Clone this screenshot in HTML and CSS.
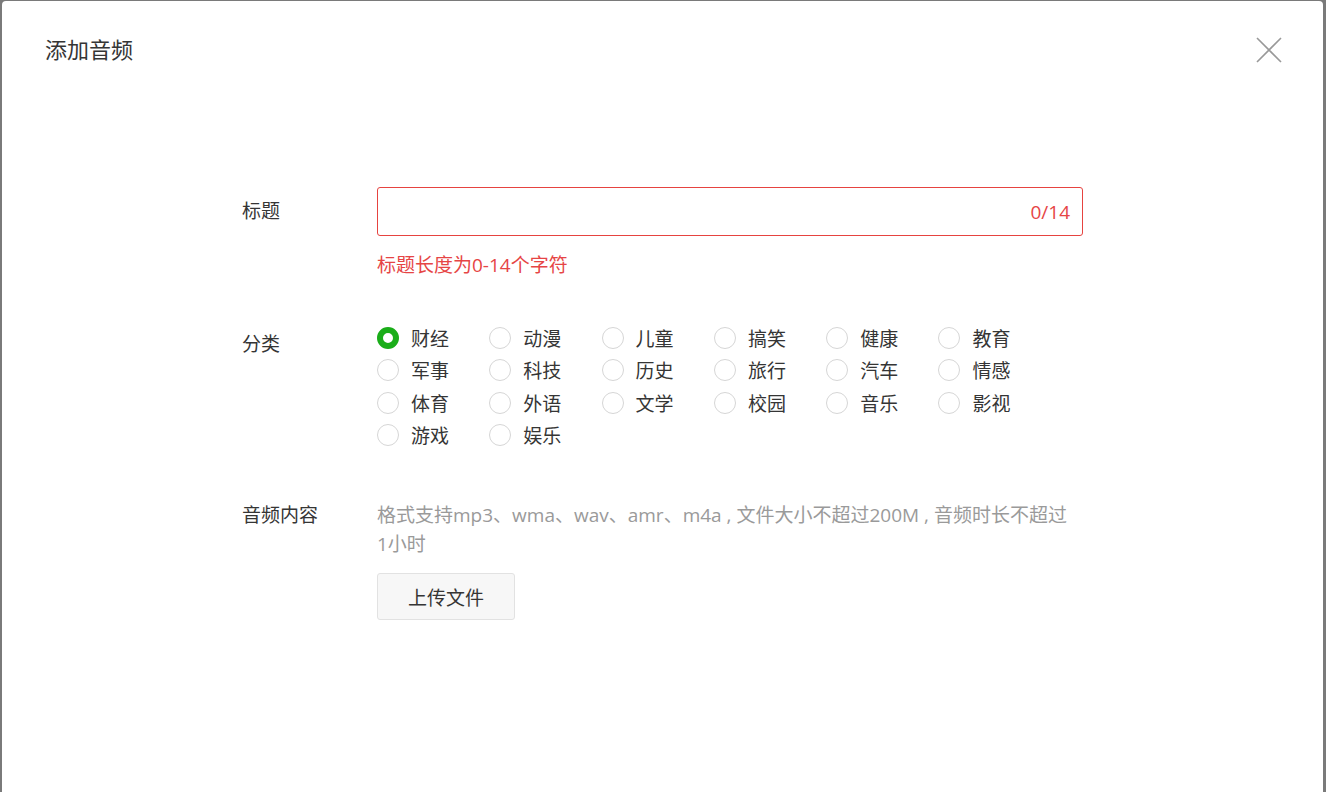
FILE: index.html
```html
<!DOCTYPE html>
<html lang="zh-CN">

<head>
    <meta charset="UTF-8">
    <title>添加音频</title>
    <link rel="stylesheet" href="styles.css">
</head>

<body>
    <div class="mask">
        <div class="dialog">
            <div class="dialog-header">
                <h3 class="dialog-title">添加音频</h3>
                <button class="close-btn" aria-label="关闭">
                    <svg width="26" height="26" viewBox="0 0 26 26">
                        <path d="M1 1 L25 25 M25 1 L1 25" stroke="#999" stroke-width="1.6" fill="none" />
                    </svg>
                </button>
            </div>

            <div class="form">
                <div class="form-row">
                    <label class="form-label label-input">标题</label>
                    <div class="form-field">
                        <div class="input-box error">
                            <input type="text" class="input">
                            <span class="counter">0/14</span>
                        </div>
                        <p class="error-tip">标题长度为0-14个字符</p>
                    </div>
                </div>

                <div class="form-row row-category">
                    <label class="form-label label-radio">分类</label>
                    <div class="form-field">
                        <div class="radio-grid">
                            <label class="radio checked"><i></i>财经</label>
                            <label class="radio"><i></i>动漫</label>
                            <label class="radio"><i></i>儿童</label>
                            <label class="radio"><i></i>搞笑</label>
                            <label class="radio"><i></i>健康</label>
                            <label class="radio"><i></i>教育</label>
                            <label class="radio"><i></i>军事</label>
                            <label class="radio"><i></i>科技</label>
                            <label class="radio"><i></i>历史</label>
                            <label class="radio"><i></i>旅行</label>
                            <label class="radio"><i></i>汽车</label>
                            <label class="radio"><i></i>情感</label>
                            <label class="radio"><i></i>体育</label>
                            <label class="radio"><i></i>外语</label>
                            <label class="radio"><i></i>文学</label>
                            <label class="radio"><i></i>校园</label>
                            <label class="radio"><i></i>音乐</label>
                            <label class="radio"><i></i>影视</label>
                            <label class="radio"><i></i>游戏</label>
                            <label class="radio"><i></i>娱乐</label>
                        </div>
                    </div>
                </div>

                <div class="form-row row-audio">
                    <label class="form-label label-text">音频内容</label>
                    <div class="form-field">
                        <p class="hint">格式支持mp3、wma、wav、amr、m4a , 文件大小不超过200M , 音频时长不超过<span class="nowrap">1小时</span></p>
                        <button class="upload-btn">上传文件</button>
                    </div>
                </div>
            </div>
        </div>
    </div>
</body>

</html>
```

FILE: styles.css
```css
* {
    box-sizing: border-box;
}

body {
    margin: 0;
    height: 100vh;
    overflow: hidden;
    background: #7a7a7a;
    font-family: "Open Sans", "Noto Sans CJK SC", sans-serif;
    color: #353535;
}

.mask {
    height: 100%;
    padding: 1px 3px 0 2px;
}

.dialog {
    height: 100%;
    background: #fff;
    border-radius: 4px 4px 0 0;
}

.dialog-header {
    display: flex;
    justify-content: space-between;
    align-items: flex-start;
    padding: 33px 41px 0 43px;
    height: 186px;
}

.dialog-title {
    margin: 0;
    font-size: 22px;
    font-weight: normal;
    line-height: 30px;
    color: #353535;
}

.close-btn {
    border: none;
    background: none;
    padding: 0;
    margin-top: 3px;
    width: 26px;
    height: 26px;
    cursor: pointer;
}

.close-btn svg {
    display: block;
}

.form {
    width: 841px;
    margin: 0 auto;
}

.form-row {
    display: flex;
}

.form-label {
    width: 135px;
    flex-shrink: 0;
    font-size: 19px;
    color: #353535;
}

.label-input {
    line-height: 49px;
}

.label-radio {
    line-height: 32px;
    padding-top: 6px;
}

.label-text {
    line-height: 29px;
}

.form-field {
    flex: 1;
}

.input-box {
    display: flex;
    align-items: center;
    height: 49px;
    border: 1px solid #e0e0e0;
    border-radius: 3px;
    padding: 0 12px;
}

.input-box.error {
    border-color: #e64340;
}

.input {
    flex: 1;
    border: none;
    outline: none;
    font: inherit;
    font-size: 19px;
    background: transparent;
}

.counter {
    font-size: 19px;
    color: #e64545;
}

.error-tip {
    margin: 17px 0 0;
    font-size: 19px;
    line-height: 24px;
    color: #e64545;
}

.row-category {
    margin-top: 45px;
}

.radio-grid {
    display: grid;
    grid-template-columns: repeat(6, 112.3px);
    grid-auto-rows: 32.3px;
}

.radio {
    display: flex;
    align-items: center;
    gap: 12px;
    font-size: 19px;
    color: #353535;
    cursor: pointer;
}

.radio i {
    width: 22px;
    height: 22px;
    border: 1px solid #d6d6d6;
    border-radius: 50%;
    background: #fff;
}

.radio.checked i {
    border: 6px solid #1aad19;
    background: #fff;
}

.row-audio {
    margin-top: 50px;
}

.hint {
    margin: 0;
    font-size: 19px;
    line-height: 29px;
    color: #9a9a9a;
}

.nowrap {
    white-space: nowrap;
}

.upload-btn {
    margin-top: 14px;
    width: 138px;
    height: 47px;
    border: 1px solid #e2e2e2;
    border-radius: 3px;
    background: #f7f7f7;
    font: inherit;
    font-size: 19px;
    color: #353535;
    cursor: pointer;
}
```
